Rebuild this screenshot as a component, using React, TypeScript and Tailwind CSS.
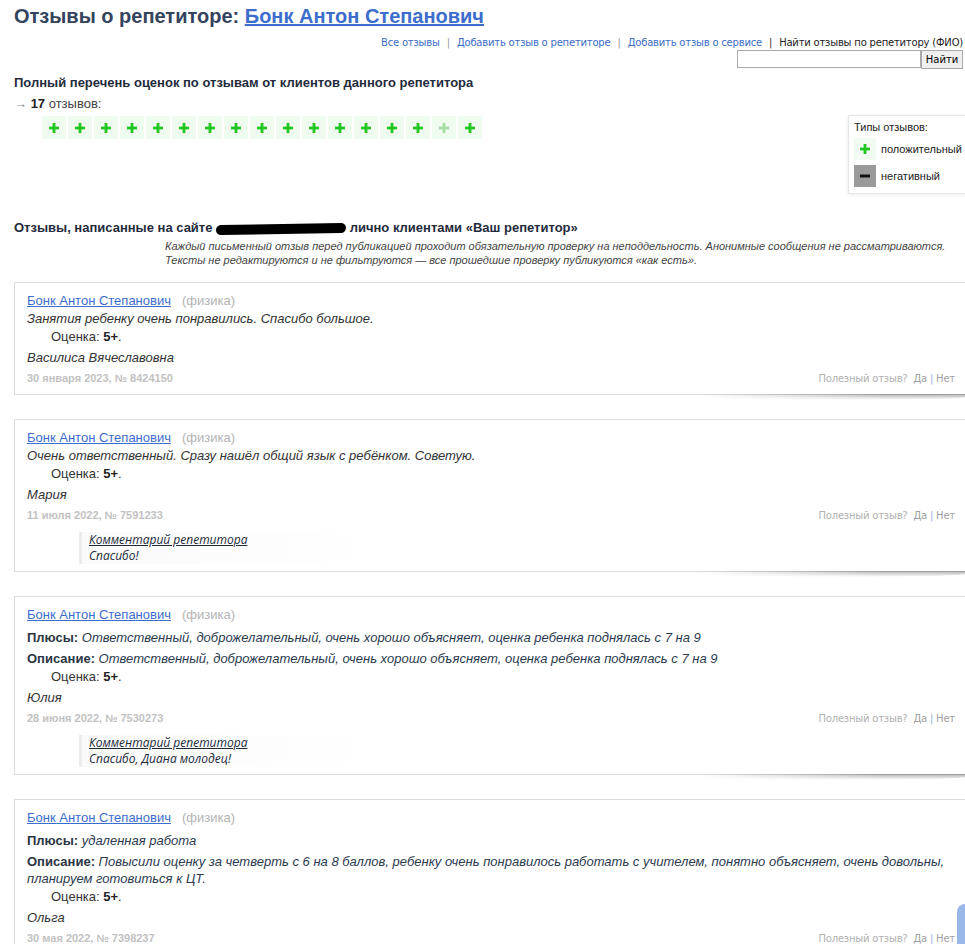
import { type ReactNode } from 'react'

const Plus = ({ color = '#22c622' }: { color?: string }) => (
  <svg width="10" height="10" viewBox="0 0 10 10">
    <rect x="3.6" y="0" width="2.8" height="10" fill={color} />
    <rect x="0" y="3.6" width="10" height="2.8" fill={color} />
  </svg>
)

const Minus = () => (
  <svg width="10" height="10" viewBox="0 0 10 10">
    <rect x="0" y="3.5" width="10" height="3" fill="#111" />
  </svg>
)

type Review = {
  pluses?: string
  description?: ReactNode
  text?: string
  author: string
  date: string
  comment?: string
}

const reviews: Review[] = [
  {
    text: 'Занятия ребенку очень понравились. Спасибо большое.',
    author: 'Василиса Вячеславовна',
    date: '30 января 2023, № 8424150',
  },
  {
    text: 'Очень ответственный. Сразу нашёл общий язык с ребёнком. Советую.',
    author: 'Мария',
    date: '11 июля 2022, № 7591233',
    comment: 'Спасибо!',
  },
  {
    pluses: 'Ответственный, доброжелательный, очень хорошо объясняет, оценка ребенка поднялась с 7 на 9',
    description: 'Ответственный, доброжелательный, очень хорошо объясняет, оценка ребенка поднялась с 7 на 9',
    author: 'Юлия',
    date: '28 июня 2022, № 7530273',
    comment: 'Спасибо, Диана молодец!',
  },
  {
    pluses: 'удаленная работа',
    description:
      'Повысили оценку за четверть с 6 на 8 баллов, ребенку очень понравилось работать с учителем, понятно объясняет, очень довольны, планируем готовиться к ЦТ.',
    author: 'Ольга',
    date: '30 мая 2022, № 7398237',
  },
]

const ReviewCard = ({ review }: { review: Review }) => (
  <div className="relative ml-[14px] w-[952px] border border-[#dcdcdc] bg-white pl-[12px] pr-[10px] pt-[9px] pb-[7px] text-[13px]">
    <div className="h-[17px] leading-[17px]">
      <a href="#" className="text-[#3d6dcc] underline">Бонк Антон Степанович</a>
      <span className="ml-[11px] text-[#b3b3b3]">(физика)</span>
    </div>
    {review.text && <div className="mt-[1px] leading-[17px] italic text-[#333]">{review.text}</div>}
    {review.pluses && (
      <div className="mt-[6px] leading-[17px]">
        <b className="text-[#2b3442]">Плюсы:</b> <i className="text-[#2c3a50]">{review.pluses}</i>
      </div>
    )}
    {review.description && (
      <p className="mt-[4px] leading-[17px] text-[#2c3a50]">
        <b className="text-[#2b3442]">Описание:</b> <i>{review.description}</i>
      </p>
    )}
    <div className="mt-[1px] pl-[24px] leading-[17px] text-[#333]">
      Оценка: <span className="font-bold text-[#222]">5+</span>.
    </div>
    <div className="mt-[4px] leading-[17px] italic text-[#333]">{review.author}</div>
    <div className="mt-[4px] flex h-[17px] items-center justify-between">
      <span className="text-[11px] font-bold text-[#c2c2c2]">{review.date}</span>
      <span className="font-['DejaVu_Sans'] text-[10px] tracking-[-0.2px] text-[#b0b0b0]">
        Полезный отзыв?&nbsp; <span className="text-[#a0a0a0]">Да</span> <span className="text-[#8fb0e0]">|</span> <span className="text-[#a0a0a0]">Нет</span>
      </span>
    </div>
    {review.comment && (
      <div className="mt-[8px] ml-[52px] w-[300px] border-l-[3px] border-[#ececec] bg-[linear-gradient(to_right,#fafafa,#ffffff)] pl-[7px] font-['Open_Sans'] text-[12px] italic leading-[16px] text-[#1d2a3c]">
        <div className="underline">Комментарий репетитора</div>
        <div>{review.comment}</div>
      </div>
    )}
    <div className="absolute left-[72%] right-[-2px] top-full h-[6px] rounded-b-[50%] bg-[linear-gradient(to_bottom,rgba(0,0,0,0.3),rgba(0,0,0,0))] [mask-image:linear-gradient(to_right,transparent,black_70%)]" />
  </div>
)

const App = () => {
  return (
    <div className="relative min-h-[944px] w-[965px] overflow-hidden bg-white font-['Liberation_Sans',Arial,sans-serif] text-[#333]">
      {/* Header */}
      <h1 className="pl-[14px] pt-[3px] text-[20px] font-bold leading-[26px] text-[#34435e]">
        Отзывы о репетиторе:{' '}
        <a href="#" className="text-[#3d6dcc] underline">Бонк Антон Степанович</a>
      </h1>
      <div className="mt-[7px] flex justify-end pr-[2px] font-['DejaVu_Sans'] text-[10px] leading-[14px] tracking-[-0.2px] text-[#3b6cc6]">
        <a href="#">Все отзывы</a>
        <span className="mx-[7px] text-[#999]">|</span>
        <a href="#">Добавить отзыв о репетиторе</a>
        <span className="mx-[7px] text-[#999]">|</span>
        <a href="#">Добавить отзыв о сервисе</a>
        <span className="mx-[7px] text-[#333]">|</span>
        <span className="text-[#222]">Найти отзывы по репетитору (ФИО)</span>
      </div>
      <div className="flex justify-end pr-[2px]">
        <input className="h-[18px] w-[184px] border border-[#a9a9a9] bg-white" />
        <button className="h-[19px] w-[42px] border border-[#a9a9a9] bg-[#efefef] font-['DejaVu_Sans'] text-[10px] text-black">Найти</button>
      </div>

      {/* Ratings */}
      <div className="flex justify-between">
        <div className="pl-[14px] pt-[5px]">
          <div className="text-[13px] font-bold leading-[18px] text-[#1f2b3c]">
            Полный перечень оценок по отзывам от клиентов данного репетитора
          </div>
          <div className="mt-[3px] text-[13px] leading-[18px]">
            <span className="text-[#888]">→</span> <b className="text-[#222]">17</b> <span className="text-[#444]">отзывов:</span>
          </div>
          <div className="ml-[28px] mt-[3px] flex gap-[2px]">
            {Array.from({ length: 17 }).map((_, i) => (
              <div key={i} className="flex h-[23px] w-[24px] items-center justify-center bg-[#effbef]">
                <Plus color={i === 15 ? '#a6dca6' : '#22c622'} />
              </div>
            ))}
          </div>
        </div>
        <div className="mr-[-10px] mt-[46px] h-[79px] w-[127px] border border-[#e6e6e6] pl-[5px] pt-[4px] text-[11px] text-[#222] shadow-[0_1px_4px_rgba(0,0,0,0.08)]">
          <div className="leading-[14px]">Типы отзывов:</div>
          <div className="mt-[4px] flex items-center gap-[5px]">
            <div className="flex h-[22px] w-[22px] items-center justify-center bg-[#f1fbf1]">
              <Plus />
            </div>
            <span>положительный</span>
          </div>
          <div className="mt-[5px] flex items-center gap-[5px]">
            <div className="flex h-[22px] w-[22px] items-center justify-center bg-[#9a9a9a]">
              <Minus />
            </div>
            <span>негативный</span>
          </div>
        </div>
      </div>

      {/* Reviews heading */}
      <div className="mt-[25px] pl-[14px] text-[13px] font-bold leading-[18px] text-[#1f2b3c]">
        Отзывы, написанные на сайте{' '}
        <span className="inline-block h-[10px] w-[130px] -rotate-1 rounded-full bg-black align-middle" /> лично клиентами «Ваш репетитор»
      </div>
      <div className="mt-[2px] pl-[165px] text-[11px] italic leading-[14px] text-[#444]">
        Каждый письменный отзыв перед публикацией проходит обязательную проверку на неподдельность. Анонимные сообщения не рассматриваются.
        <br />
        Тексты не редактируются и не фильтруются — все прошедшие проверку публикуются «как есть».
      </div>

      <div className="mt-[15px] flex flex-col gap-[24px]">
        {reviews.map((r, i) => (
          <ReviewCard key={i} review={r} />
        ))}
      </div>

      <div className="fixed bottom-[-8px] right-[-28px] h-[48px] w-[36px] rounded-lg bg-[#7fa6e4] opacity-80" />
    </div>
  )
}

export default App
